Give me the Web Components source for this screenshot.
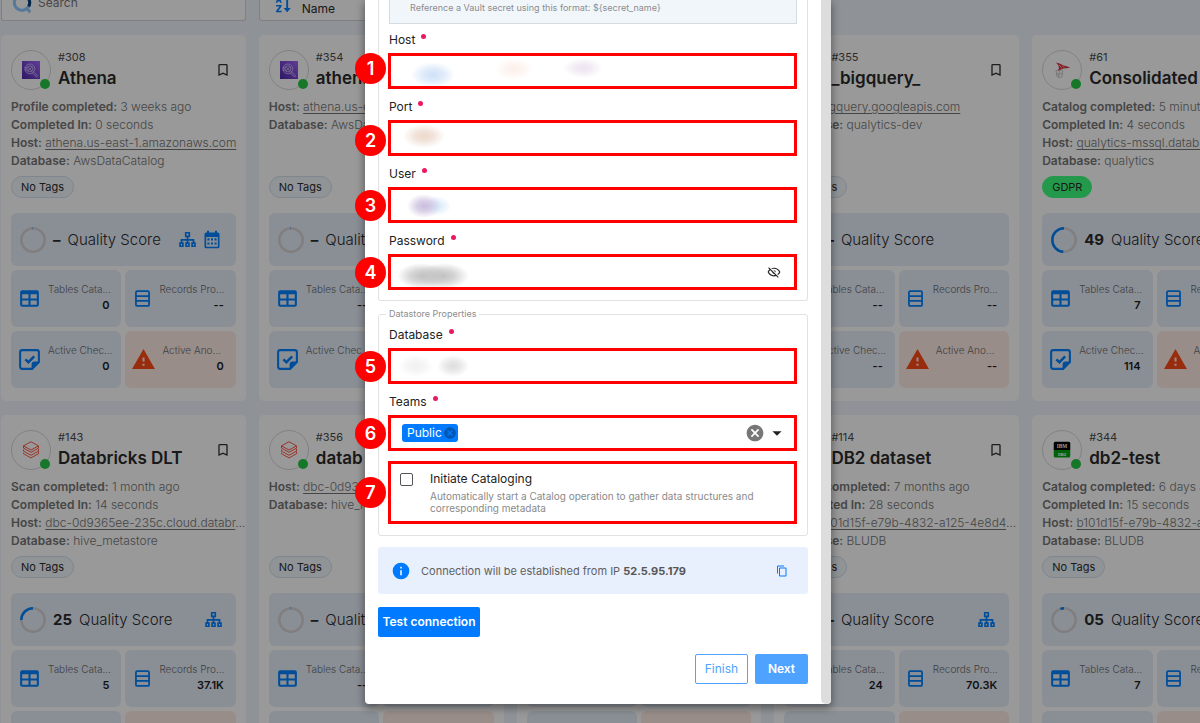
<!DOCTYPE html>
<html lang="en">
<head>
<meta charset="utf-8">
<title>Datastores</title>
<style>
  html, body { margin: 0; height: 100%; overflow: hidden; }
  body { font-family: Inter, "Liberation Sans", sans-serif; font-size: 12px; line-height: 18px; color: #2b2b2b; background: #eef6fc; }
</style>
</head>
<body>
<ds-page></ds-page>
<script>
const ICONS = {
  bookmark: '<path d="M17 18L12 15.82L7 18V5H17M17 3H7A2 2 0 0 0 5 5V21L12 18L19 21V5C19 3.89 18.1 3 17 3Z"/>',
  eyeoff: '<path d="M2,5.27L3.28,4L20,20.72L18.73,22L15.65,18.92C14.5,19.3 13.28,19.5 12,19.5C7,19.5 2.73,16.39 1,12C1.69,10.24 2.79,8.69 4.19,7.46L2,5.27M12,9A3,3 0 0,1 15,12C15,12.35 14.94,12.69 14.83,13L11,9.17C11.31,9.06 11.65,9 12,9M12,4.5C17,4.5 21.27,7.61 23,12C22.18,14.08 20.79,15.88 19,17.19L17.58,15.76C18.94,14.82 20.06,13.54 20.82,12C19.17,8.64 15.76,6.5 12,6.5C10.91,6.5 9.84,6.68 8.84,7L7.3,5.47C8.74,4.85 10.33,4.5 12,4.5M3.18,12C4.83,15.36 8.24,17.5 12,17.5C12.69,17.5 13.37,17.43 14,17.29L11.72,15C10.29,14.85 9.15,13.71 9,12.28L5.6,8.87C4.61,9.72 3.78,10.78 3.18,12Z"/>',
  copy: '<path d="M19,21H8V7H19M19,5H8A2,2 0 0,0 6,7V21A2,2 0 0,0 8,23H19A2,2 0 0,0 21,21V7A2,2 0 0,0 19,5M16,1H4A2,2 0 0,0 2,3V17H4V3H16V1Z"/>',
  info: '<path d="M13,9H11V7H13M13,17H11V11H13M12,2A10,10 0 0,0 2,12A10,10 0 0,0 12,22A10,10 0 0,0 22,12A10,10 0 0,0 12,2Z"/>',
  clear: '<path d="M12,2C17.53,2 22,6.47 22,12C22,17.53 17.53,22 12,22C6.47,22 2,17.53 2,12C2,6.47 6.47,2 12,2M15.59,7L12,10.59L8.41,7L7,8.41L10.59,12L7,15.59L8.41,17L12,13.41L15.59,17L17,15.59L13.41,12L17,8.41L15.59,7Z"/>',
  alert: '<path d="M13,14H11V10H13M13,18H11V16H13M1,21H23L12,2L1,21Z"/>',
  table: '<path d="M5,4H19A2,2 0 0,1 21,6V18A2,2 0 0,1 19,20H5A2,2 0 0,1 3,18V6A2,2 0 0,1 5,4M5,8V12H11V8H5M13,8V12H19V8H13M5,14V18H11V14H5M13,14V18H19V14H13Z"/>',
  records: '<path fill="none" stroke="currentColor" stroke-width="2" d="M6 3.500H18A1.500 1.500 0 0 1 19.500 5V19A1.500 1.500 0 0 1 18 20.500H6A1.500 1.500 0 0 1 4.500 19V5A1.500 1.500 0 0 1 6 3.500ZM4.500 9.200H19.500M4.500 14.800H19.500"/>',
  checks: '<path fill="none" stroke="currentColor" stroke-width="2" d="M14.500 21H5A2 2 0 0 1 3 19V5A2 2 0 0 1 5 3H19A2 2 0 0 1 21 5V14.500Z"/><path d="M14 21.500V17A3 3 0 0 1 17 14H21.500Z"/><path fill="none" stroke="currentColor" stroke-width="2.400" d="M8 11.800L11 14.600L16.500 9"/>',
  sitemap: '<path fill="none" stroke="currentColor" stroke-width="2.400" d="M9.500 2.500H14.500V7.500H9.500ZM1.500 17H5.500V21.500H1.500ZM10 17H14V21.500H10ZM18.500 17H22.500V21.500H18.500ZM12 7.500V17M3.500 17V12.500H20.500V17"/>',
  calendar: '<path d="M3 5A2 2 0 0 1 5 3H6V1H8.500V3H15.500V1H18V3H19A2 2 0 0 1 21 5V20A2 2 0 0 1 19 22H5A2 2 0 0 1 3 20ZM5 8.500V20H19V8.500Z" fill-rule="evenodd"/><path d="M6.500 10H9V12.500H6.500ZM10.800 10H13.200V12.500H10.800ZM15 10H17.500V12.500H15ZM6.500 15H9V17.500H6.500ZM10.800 15H13.200V17.500H10.800ZM15 15H17.500V17.500H15Z"/>',
  caret: '<path d="M7,10L12,15L17,10H7Z"/>',
  athena: '<defs><linearGradient id="g" x1="0" y1="1" x2="1" y2="0"><stop offset="0" stop-color="#4d27a8"/><stop offset="1" stop-color="#a166ff"/></linearGradient></defs><path fill="url(#g)" d="M0 0H24V24H0Z"/><g fill="none" stroke="#e6d9ff" stroke-width=".9"><circle cx="10.500" cy="10.500" r="6.500"/><circle cx="10.500" cy="10.500" r="4"/><path d="M3.500 9H7M3.500 12H7M8 8.500L13 13M8 13L13 8.500M15 14L20.500 19.500A1.200 1.200 0 0 1 19 21L13.500 15.500"/></g>',
  bricks: '<g fill="none" stroke="#ff3621" stroke-width="1.100"><path d="M12 1L22 6.500L12 12L2 6.500ZM2 6.500V9.500L12 15L22 9.500V7M2 11.500V13.500L12 19L22 13.500V10.500M2 15.500V17L12 22.500L22 17V14"/></g>',
  mssql: '<g fill="none" stroke="#b8b8b8" stroke-width="1"><path d="M4 13Q9 10 13 13L12 21Q8 24 5 20Z M4 16Q8 20 12.500 16M9 12L7 22"/></g><path fill="#d9303a" d="M4 2Q10 3 14 6Q20 7 23 9Q14 9 6 13Q11 9 4 2Z"/><path fill="none" stroke="#fff" stroke-width=".8" d="M8 5L12 10M12 6L15 9"/>',
  db2: '<path fill="#000" d="M3 1H21A2 2 0 0 1 23 3V12H1V3A2 2 0 0 1 3 1Z"/><path fill="#00a60e" d="M1 12H23V20A2 2 0 0 1 21 22H3A2 2 0 0 1 1 20Z"/><text x="12" y="9.500" text-anchor="middle" font-family="Liberation Serif" font-weight="700" font-size="7" fill="#fff">IBM</text><text x="12" y="19.500" text-anchor="middle" font-family="Liberation Sans" font-weight="700" font-size="5.500" fill="#fff">DB2</text>',
  logo: '<circle cx="12" cy="10.500" r="9.200" fill="none" stroke="#8fcaff" stroke-width="3.600"/><path fill="none" stroke="#0b3f75" stroke-width="3.600" d="M12 1.300A9.200 9.200 0 0 1 20 15"/><path fill="#8fcaff" d="M15 17L21 23.500L23 20L18 15Z"/>',
  sort: '<path d="M1 9L3.800 1H6.200L9 9H6.800L6.300 7.200H3.700L3.200 9ZM1.500 12H8.800V14L4.300 19.500H8.800V21.500H1.500V19.500L6 14H1.500ZM15 3H17.500V16H21L16.200 21.500L11.500 16H15Z"/>'
};

function define(name, html, setup) {
  const tpl = document.createElement('template');
  tpl.innerHTML = html;
  customElements.define(name, class extends HTMLElement {
    constructor() {
      super();
      this.attachShadow({ mode: 'open' });
    }
    connectedCallback() {
      if (this.shadowRoot.firstChild) return;
      this.shadowRoot.append(tpl.content.cloneNode(true));
      if (setup) setup(this, this.shadowRoot);
    }
  });
}

define('ds-icon', `<style>
  :host { display: inline-flex; flex: none; width: var(--icon, 16px); height: var(--icon, 16px); }
  svg { width: 100%; height: 100%; fill: currentColor; overflow: visible; }
</style>`, (host, root) => {
  root.innerHTML += `<svg viewBox="0 0 24 24" aria-hidden="true">${ICONS[host.getAttribute('name')]}</svg>`;
});

define('ds-tile', `<style>
  :host { display: flex; align-items: center; min-width: 0; height: 57px; border-radius: 6px; background: #e6eefb; color: #0080ff; }
  :host([kind="alert"]) { background: #ffebe6; color: #ff4a16; }
  .icon { flex: none; width: 37px; display: flex; justify-content: center; }
  :host([kind="records"]) .icon { width: 34px; }
  dl { margin: 0; flex: 1; min-width: 0; padding: 0 12px 3px 0; }
  dt { font-size: 10px; line-height: 16px; color: #6a6a6a; font-weight: 300; white-space: nowrap; }
  dd { margin: 0; font-size: 11px; line-height: 16px; font-weight: 600; color: #1e1e1e; text-align: right; }
  ds-icon { --icon: 25px; }
  :host([kind="records"]) ds-icon { --icon: 21px; }
</style>
<span class="icon"></span><dl><dt><slot></slot></dt><dd></dd></dl>`, (host, root) => {
  root.querySelector('.icon').innerHTML = `<ds-icon name="${host.getAttribute('kind')}"></ds-icon>`;
  root.querySelector('dd').textContent = host.getAttribute('value');
});

define('ds-score', `<style>
  :host { display: flex; align-items: center; height: 53px; padding: 0 14px 0 9px; border-radius: 6px; background: #e6eefb; font-size: 15px; color: #2b2b2b; white-space: nowrap; }
  svg { flex: none; width: 26px; height: 26px; margin-right: 7px; }
  b { font-weight: 700; margin-right: 7px; }
  .t { font-weight: 300; flex: 1; }
  .icons { display: flex; align-items: center; gap: 6px; color: #0080ff; }
  ds-icon { --icon: 17px; }
  ds-icon[name="calendar"] { --icon: 20px; }
</style>
<svg viewBox="0 0 26 26" fill="none" stroke-width="2.500"><circle cx="13" cy="13" r="11.700" stroke="#d5d2d2"/><path stroke="#0080ff" pathLength="100" d="M13 1.300A11.700 11.700 0 0 0 13 24.700A11.700 11.700 0 0 0 13 1.300"/></svg><b></b><span class="t"></span><span class="icons"></span>`, (host, root) => {
  const n = host.getAttribute('score');
  root.querySelector('b').textContent = n;
  root.querySelector('.t').textContent = n ? 'Quality Score' : '';
  const arc = root.querySelector('path');
  arc.setAttribute('stroke-dasharray', `${parseInt(n) || 1} 200`);
  if (!parseInt(n)) arc.setAttribute('opacity', '.5');
  root.querySelector('.icons').innerHTML = (host.getAttribute('icons') || '').split(' ').filter(Boolean)
    .map(i => `<ds-icon name="${i}"></ds-icon>`).join('');
});

define('ds-card', `<style>
  :host { display: block; min-width: 0; padding: 15px 10px 13px; border-radius: 5px; background: #fff; }
  header { display: flex; gap: 7px; }
  .avatar { position: relative; box-sizing: border-box; flex: none; width: 40px; height: 40px; border: 1px solid #d9d9d9; border-radius: 50%; display: flex; align-items: center; justify-content: center; }
  .avatar::after { content: ""; position: absolute; right: 0; bottom: 0; width: 10px; height: 10px; border-radius: 50%; background: #26c645; }
  .avatar ds-icon { --icon: 18px; }
  .name { flex: 1; min-width: 0; white-space: nowrap; }
  .name small { display: block; font-size: 11px; line-height: 14px; color: #4a4a4a; }
  h2 { margin: 2px 0 0; font-size: 17px; line-height: 24px; font-weight: 600; color: #2a2a2a; }
  .mark { align-self: center; padding: 0 5px; border: 0; background: none; color: #333; display: flex; }
  .mark ds-icon { --icon: 16px; }
  .meta { margin-top: 8px; min-height: 72px; color: #757575; font-weight: 300; white-space: nowrap; }
  .meta b { font-weight: 600; color: #757575; }
  a { color: inherit; text-underline-offset: 2px; }
  .tag { box-sizing: border-box; display: inline-block; height: 22px; line-height: 20px; margin: 6px 0 15px; padding: 0 9px; border: 1px solid #d3e2ee; border-radius: 11px; background: #f1f7fc; vertical-align: top; font-size: 11px; }
  .tag.gdpr { background: #3cff7d; border-color: #3cff7d; }
  .tag:empty { visibility: hidden; }
  .tiles { display: grid; grid-template-columns: 1fr 1fr; gap: 4px; }
  ds-score { grid-column: 1 / -1; }
</style>
<header><span class="avatar"></span><div class="name"><small></small><h2></h2></div><button class="mark" aria-label="Bookmark"><ds-icon name="bookmark"></ds-icon></button></header>
<div class="meta"></div>
<span class="tag"></span>
<div class="tiles"></div>`, (host, root) => {
  const d = host.data, $ = s => root.querySelector(s);
  $('.avatar').innerHTML = `<ds-icon name="${d.logo}"></ds-icon>`;
  $('small').textContent = d.id;
  $('h2').textContent = d.name;
  $('.meta').innerHTML = d.meta.map(([k, v]) => {
    const cut = v.endsWith('…') ? '…' : '';
    return `<div><b>${k}:</b> ${k === 'Host' ? `<a href="#">${v.replace('…', '')}</a>${cut}` : v}</div>`;
  }).join('');
  $('.tag').textContent = d.tag;
  if (d.tag === 'GDPR') $('.tag').classList.add('gdpr');
  const tile = (kind, label, v) => `<ds-tile kind="${kind}" value="${v}">${v && label}</ds-tile>`;
  const [t, r, c, a] = d.values;
  $('.tiles').innerHTML = `<ds-score score="${d.score}" icons="${d.icons || ''}"></ds-score>`
    + tile('table', 'Tables Cata…', t) + tile('records', 'Records Pro…', r)
    + tile('checks', 'Active Chec…', c) + tile('alert', 'Active Ano…', a);
});

/* Red numbered outline around one control. */
define('ds-callout', `<style>
  :host { display: flex; align-items: center; position: relative; box-sizing: border-box; min-height: 36px; margin-left: -1px; border: 3px solid #f00; background: #fff; }
  .n { position: absolute; left: -36px; width: 31px; height: 31px; border-radius: 50%; background: #f00; color: #fff; font-size: 18px; line-height: 31px; font-weight: 600; text-align: center; }
  :host([badge="start"]) .n { top: -3px; }
  :host([badge="end"]) .n { bottom: -3px; }
</style><span class="n"><slot name="n"></slot></span><slot></slot>`);

const LABEL_CSS = `
  label { display: block; margin-bottom: 4px; font-size: 12px; line-height: 18px; color: #222; }
  label::after { content: ""; display: inline-block; width: 5px; height: 5px; margin-left: 6px; border-radius: 50%; background: #ec1a5c; vertical-align: 5px; }`;

define('ds-field', `<style>
  :host { display: block; }
  ${LABEL_CSS}
  input { flex: 1; min-width: 0; height: 30px; padding: 0 12px; border: 0; outline: 0; font: inherit; background-color: #fff; background-repeat: no-repeat; }
  button { padding: 0 13px; border: 0; background: none; color: #222; display: flex; }
  ds-icon { --icon: 14px; }
</style><label for="i"></label><ds-callout><span slot="n"></span><input id="i"></ds-callout>`, (host, root) => {
  const input = root.querySelector('input');
  root.querySelector('label').textContent = host.getAttribute('label');
  root.querySelector('span').textContent = host.getAttribute('n');
  root.querySelector('ds-callout').setAttribute('badge', host.getAttribute('badge') || '');
  input.type = host.getAttribute('type') || 'text';
  if (input.type === 'password')
    input.insertAdjacentHTML('afterend', '<button aria-label="Show password"><ds-icon name="eyeoff"></ds-icon></button>');
  /* masked value: soft spots given as "colour x width top height" */
  const spots = host.getAttribute('mask').split(',').map(s => s.trim().split(' '));
  input.style.backgroundImage = spots.map(([c]) => `radial-gradient(closest-side, ${c}, ${c}b0 45%, ${c}00)`).join();
  input.style.backgroundPosition = spots.map(s => `${s[1]}px ${s[3]}px`).join();
  input.style.backgroundSize = spots.map(s => `${s[2]}px ${s[4]}px`).join();
});

define('ds-teams', `<style>
  :host { display: block; }
  ${LABEL_CSS}
  .chip { display: flex; align-items: center; gap: 1px; height: 18px; margin-left: 11px; padding: 0 1px 0 5px; border-radius: 3px; background: #007bff; color: #fff; font-size: 12px; }
  button { padding: 0; border: 0; background: none; display: flex; }
  .chip button { color: #0056b3; --icon: 14px; }
  .clear { margin-left: auto; color: #777; --icon: 20px; }
  .pick { position: relative; display: flex; width: 24px; margin-right: 5px; justify-content: center; color: #222; --icon: 22px; }
  select { position: absolute; inset: 0; width: 100%; appearance: none; border: 0; background: none; }
</style><label for="t">Teams</label>
<ds-callout><span slot="n">6</span><span class="chip">Public<button aria-label="Remove Public"><ds-icon name="clear"></ds-icon></button></span>
<button class="clear" aria-label="Clear teams"><ds-icon name="clear"></ds-icon></button>
<span class="pick"><ds-icon name="caret"></ds-icon><select id="t"><option aria-label="Public"></option></select></span></ds-callout>`);

define('ds-catalog', `<style>
  :host { display: block; }
  .row { display: flex; gap: 17px; padding: 7px 12px 7px 9px; }
  input { appearance: none; flex: none; box-sizing: border-box; width: 13px; height: 13px; margin: 2px 0 0 0; border: 1px solid #555; border-radius: 2px; background: #fff; }
  label { display: block; line-height: 16px; color: #222; }
  p { margin: 3px 0 0; font-size: 10px; line-height: 12px; color: #8a8a8a; }
</style><ds-callout><span slot="n">7</span><div class="row"><input type="checkbox" id="c" aria-describedby="d"><div><label for="c">Initiate Cataloging</label>
<p id="d">Automatically start a Catalog operation to gather data structures and corresponding metadata</p></div></div></ds-callout>`);

define('ds-dialog', `<style>
  :host { display: grid; grid-template-columns: 1fr 10px; width: 466px; border-radius: 0 0 4px 4px; background: #fff; box-shadow: 0 3px 8px 1px rgba(0,0,0,.4); align-self: flex-start; }
  .body { padding: 0 13px 20px; }
  .bar { background: #ddd; border-radius: 0 0 5px 5px; }
  fieldset { min-width: 0; margin: 0; padding: 0 10px 10px; border: 1px solid #e2e2e2; border-radius: 3px; display: block; }
  .first { border-top: 0; border-radius: 0 0 3px 3px; }
  .stack { display: grid; gap: 9px; }
  .vault { box-sizing: border-box; height: 24px; margin-bottom: 7px; padding: 0 20px; border: 1px solid #d5dbe2; border-top: 0; background: #f1f6fb; font-size: 9px; line-height: 16px; color: #8d8d8d; }
  .second { margin-top: 5px; padding-bottom: 11px; }
  legend { margin-left: -3px; padding: 0 3px; font-size: 9px; line-height: 16px; color: #8d8d8d; }
  .second .stack { margin-top: 4px; }
  ds-catalog { margin-top: 1px; }
  .info { display: flex; align-items: center; height: 47px; margin-top: 11px; padding: 0 20px 0 13px; border-radius: 3px; background: #e9f0fd; color: #606060; font-size: 11px; }
  .info ds-icon { color: #007bff; --icon: 20px; margin-right: 10px; }
  .info span { flex: 1; }
  .info b { font-weight: 700; color: #555; }
  .info button ds-icon { --icon: 12px; margin: 0; }
  button { font: inherit; padding: 0; border: 0; border-radius: 2px; background: none; }
  .info button { display: flex; }
  .btn { height: 30px; background: #007bff; color: #fff; font-weight: 600; }
  .test { display: block; margin-top: 13px; width: 102px; }
  footer { display: flex; justify-content: flex-end; gap: 7px; margin-top: 17px; }
  footer .btn { width: 53px; background: #4da3ff; }
  footer .finish { background: #fff; border: 1px solid #4da3ff; color: #4da3ff; font-weight: 400; }
</style>
<div class="body">
  <fieldset class="first">
    <div class="vault">Reference a Vault secret using this format: \${secret_name}</div>
    <div class="stack">
      <ds-field label="Host" n="1" badge="start" mask="#cfe1f7 20 44 6 26, #fdf0ea 104 38 2 22, #eee4f0 172 40 2 20"></ds-field>
      <ds-field label="Port" n="2" badge="end" mask="#ecd8cb 12 42 1 24"></ds-field>
      <ds-field label="User" n="3" mask="#c9bddd 16 34 4 24, #d9ebfa 32 28 6 20"></ds-field>
      <ds-field label="Password" n="4" type="password" mask="#c2c2c2 6 50 6 26, #c2c2c2 26 52 6 26"></ds-field>
    </div>
  </fieldset>
  <fieldset class="second">
    <legend>Datastore Properties</legend>
    <div class="stack">
      <ds-field label="Database" n="5" mask="#f0f0f0 8 34 4 22, #dedede 46 32 4 22"></ds-field>
      <ds-teams></ds-teams>
      <ds-catalog></ds-catalog>
    </div>
  </fieldset>
  <div class="info"><ds-icon name="info"></ds-icon><span>Connection will be established from IP <b>52.5.95.179</b></span><button aria-label="Copy IP"><ds-icon name="copy"></ds-icon></button></div>
  <button class="btn test">Test connection</button>
  <footer><button class="btn finish">Finish</button><button class="btn">Next</button></footer>
</div>
<div class="bar"></div>`);

const NONE = ['--', '--', '--', '--'];
const EMPTY = { id: '', name: '', logo: 'bricks', tag: '', meta: [], score: '', values: ['', '', '', ''] };
const CARDS = [
  { id: '#308', name: 'Athena', logo: 'athena', tag: 'No Tags', meta: [['Profile completed', '3 weeks ago'], ['Completed In', '0 seconds'], ['Host', 'athena.us-east-1.amazonaws.com'], ['Database', 'AwsDataCatalog']], score: '–', icons: 'sitemap calendar', values: ['0', '--', '0', '0'] },
  { id: '#354', name: 'athena', logo: 'athena', tag: 'No Tags', meta: [['Host', 'athena.us-east'], ['Database', 'AwsData']], score: '–', values: ['--', '', '--', ''] },
  EMPTY,
  { id: '#355', name: '_bigquery_', logo: 'bricks', tag: 'No Tags', meta: [['Host', 'bigquery.googleapis.com'], ['Database', 'qualytics-dev']], score: '–', values: NONE },
  { id: '#61', name: 'Consolidated', logo: 'mssql', tag: 'GDPR', meta: [['Catalog completed', '5 minutes'], ['Completed In', '4 seconds'], ['Host', 'qualytics-mssql.databa'], ['Database', 'qualytics']], score: '49', values: ['7', '--', '114', '--'] },
  { id: '#143', name: 'Databricks DLT', logo: 'bricks', tag: 'No Tags', meta: [['Scan completed', '1 month ago'], ['Completed In', '14 seconds'], ['Host', 'dbc-0d9365ee-235c.cloud.databr…'], ['Database', 'hive_metastore']], score: '25', icons: 'sitemap', values: ['5', '37.1K', '', ''] },
  { id: '#356', name: 'datab', logo: 'bricks', tag: 'No Tags', meta: [['Host', 'dbc-0d9365'], ['Database', 'hive_m']], score: '–', values: ['--', '', '', ''] },
  EMPTY,
  { id: '#114', name: 'DB2 dataset', logo: 'db2', tag: 'No Tags', meta: [['Profile completed', '7 months ago'], ['Completed In', '28 seconds'], ['Host', 'b101d15f-e79b-4832-a125-4e8d4…'], ['Database', 'BLUDB']], score: '–', icons: 'sitemap', values: ['24', '70.3K', '', ''] },
  { id: '#344', name: 'db2-test', logo: 'db2', tag: 'No Tags', meta: [['Catalog completed', '6 days a'], ['Completed In', '15 seconds'], ['Host', 'b101d15f-e79b-4832-a1'], ['Database', 'BLUDB']], score: '05', values: ['7', '--', '', ''] }
];

define('ds-page', `<style>
  :host { display: block; height: 100vh; overflow: hidden; position: relative; }
  .grid { display: grid; grid-template-columns: repeat(5, minmax(0, 1fr)); column-gap: 13px; row-gap: 14px; margin: 0 -77px 0 1px; }
  .box { box-sizing: border-box; height: 21px; border: 1px solid #d5d5d5; border-top: 0; border-radius: 0 0 3px 3px; background: #fff; display: flex; gap: 6px; padding: 0 10px; }
  .box ds-icon { --icon: 20px; align-self: flex-end; margin-bottom: 6px; }
  .box input { flex: 1; min-width: 0; align-self: flex-start; height: 18px; margin-top: -6px; padding: 0; border: 0; background: none; font: inherit; }
  .box input::placeholder { color: #777; }
  .sort { grid-column: 2 / 4; gap: 9px; padding-left: 15px; }
  .box.sort ds-icon { color: #0080ff; --icon: 18px; }
  .veil { position: absolute; inset: 0; background: rgba(0,0,0,.4); display: flex; justify-content: center; padding-right: 4px; }
  .rest { grid-column: 4 / 6; }
</style>
<main class="grid"><div class="box"><ds-icon name="logo"></ds-icon><input placeholder="Search" aria-label="Search"></div><div class="box sort"><ds-icon name="sort"></ds-icon><span>Name</span></div><span class="rest"></span></main>
<div class="veil"><ds-dialog></ds-dialog></div>`, (host, root) => {
  for (const data of CARDS) {
    const card = document.createElement('ds-card');
    card.data = data;
    root.querySelector('main').append(card);
  }
});
</script>
</body>
</html>
